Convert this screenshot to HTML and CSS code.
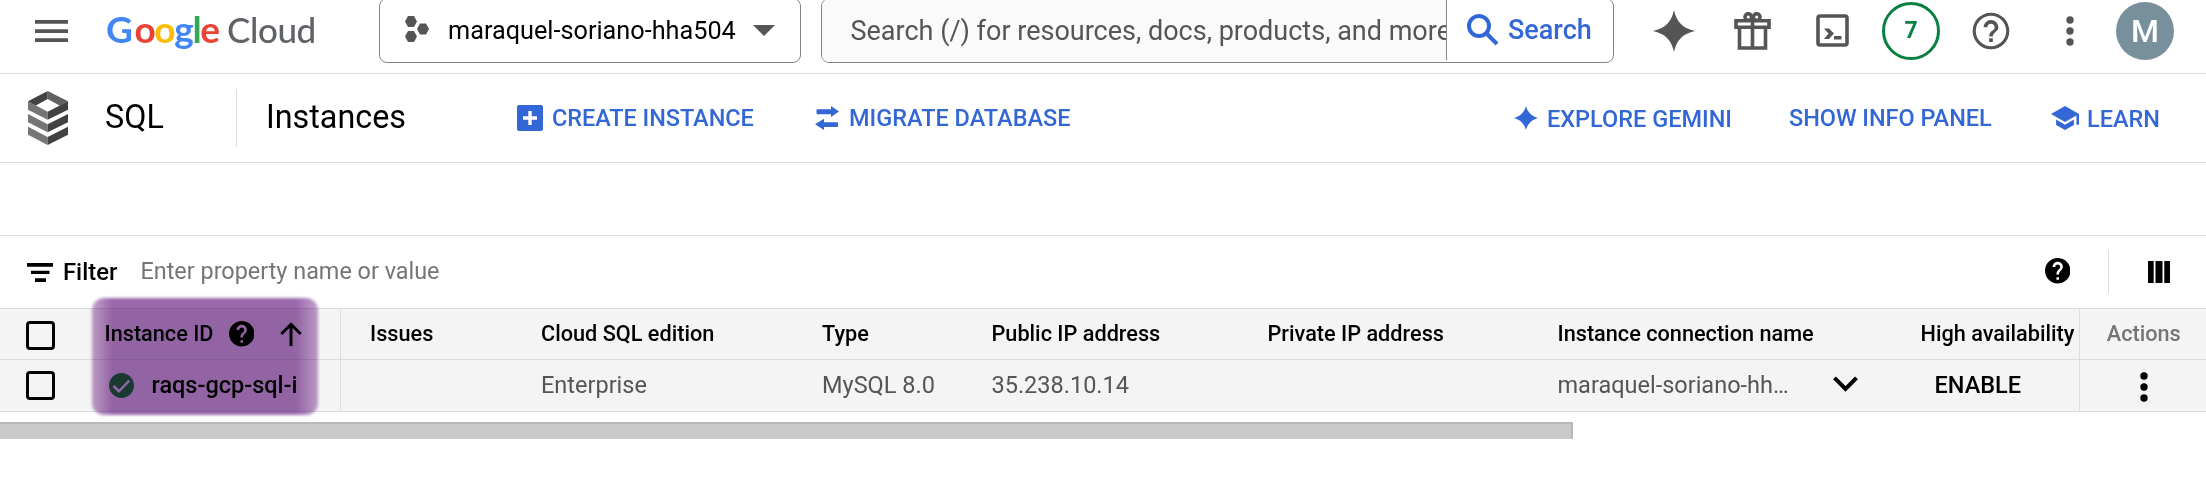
FILE: index.html
```html
<!DOCTYPE html>
<html lang="en">
<head>
<meta charset="utf-8">
<title>SQL – Instances – Google Cloud</title>
<link rel="stylesheet" href="styles.css">
</head>
<body>
<header class="topbar">
  <svg class="menu" viewBox="0 0 33 22"><path d="M0 0h33v3.7H0zM0 9.2h33v3.7H0zM0 18.3h33V22H0z"/></svg>
  <div class="brand"><span class="google"><span class="b cap">G</span><span class="r">o</span><span class="y">o</span><span class="b">g</span><span class="g">l</span><span class="r">e</span></span><span class="cloud">Cloud</span></div>
  <div class="project">
    <svg class="hexes" viewBox="0 0 24 26"><path d="M3 0h6l3 5.5L9 11H3L0 5.5zM15 7.5h6l3 5.5-3 5.5h-6L12 13zM3 15h6l3 5.5L9 26H3l-3-5.5z"/></svg>
    <span class="project-name">maraquel-soriano-hha504</span>
    <svg class="caret" viewBox="0 0 22 11"><path d="M0 0h22L11 11z"/></svg>
  </div>
  <div class="search">
    <div class="search-input">Search (/) for resources, docs, products, and more</div>
    <div class="search-button">
      <svg class="magnifier" viewBox="0 0 32 32"><circle cx="12" cy="12" r="10"/><path d="M19 19l11 11"/></svg>
      <span>Search</span>
    </div>
  </div>
  <svg class="spark" viewBox="0 0 42 42"><path d="M21 0C23.5 12 30 18.500 42 21C30 23.500 23.500 30 21 42C18.500 30 12 23.500 0 21C12 18.500 18.500 12 21 0z"/></svg>
  <svg class="gift" viewBox="0 0 37 38"><path d="M2 8.800h33v6.500H2zM5.500 15.300h26V36h-26zM18.500 8V36"/><circle cx="14.300" cy="5" r="3.300"/><circle cx="22.700" cy="5" r="3.300"/></svg>
  <svg class="shell" viewBox="0 0 33 33"><rect x="2" y="2" width="29" height="29" rx="2"/><path class="solid" d="M8 14.500h5l5 5-5 5.500H8l4.500-5.500zM18 22h7.500v3.500H18z"/></svg>
  <div class="count">7</div>
  <svg class="help-outline" viewBox="0 0 24 24"><path d="M11 18h2v-2h-2v2zm1-16C6.480 2 2 6.480 2 12s4.480 10 10 10 10-4.480 10-10S17.520 2 12 2zm0 18.300c-4.580 0-8.300-3.720-8.300-8.300S7.420 3.700 12 3.700s8.300 3.720 8.300 8.300-3.720 8.300-8.300 8.300zM12 6c-2.210 0-4 1.790-4 4h2c0-1.100.9-2 2-2s2 .9 2 2c0 2-3 1.750-3 5h2c0-2.250 3-2.500 3-5 0-2.210-1.790-4-4-4z"/></svg>
  <svg class="dots" viewBox="0 0 8 30"><circle cx="4" cy="4" r="3.700"/><circle cx="4" cy="15" r="3.700"/><circle cx="4" cy="26" r="3.700"/></svg>
  <div class="avatar">M</div>
</header>

<nav class="subbar">
  <svg class="sql-logo" viewBox="84 272 120 162">
    <path fill="#424242" d="M84 303l59-31v24l-37 20z"/><path fill="#616161" d="M143 272l61 31-24 13-37-20z"/>
    <path fill="#757575" d="M84 303l59 31v24l-59-30zM84 341l59 31v24l-59-30zM84 379l59 31v24l-59-31z"/>
    <path fill="#424242" d="M143 334l61-31v25l-61 30zM143 372l61-31v25l-61 30zM143 410l61-31v24l-61 31z"/>
  </svg>
  <h1 class="product">SQL</h1>
  <h2 class="page">Instances</h2>
  <div class="action create"><svg class="plus" viewBox="0 0 26 26"><path fill-rule="evenodd" d="M2 0h22a2 2 0 0 1 2 2v22a2 2 0 0 1-2 2H2a2 2 0 0 1-2-2V2a2 2 0 0 1 2-2zM11.300 6v5.300H6v3.400h5.300V20h3.400v-5.300H20v-3.400h-5.300V6z"/></svg><span>CREATE INSTANCE</span></div>
  <div class="action migrate"><svg class="swap" viewBox="0 0 24 24"><path d="M2.500 3.300H16V0l8 5.500-8 5.600V8.200H2.500a1 1 0 0 1-1-1V4.300a1 1 0 0 1 1-1zM22 16.200H9V12.800L0 18.300 9 24v-3h13a1 1 0 0 0 1-1v-2.800a1 1 0 0 0-1-1z"/></svg><span>MIGRATE DATABASE</span></div>
  <div class="action gemini"><svg class="mini-spark" viewBox="0 0 24 24"><path d="M12 0C13.500 6 18 10.500 24 12C18 13.500 13.500 18 12 24C10.500 18 6 13.500 0 12C6 10.500 10.500 6 12 0z"/></svg><span class="low">EXPLORE GEMINI</span></div>
  <div class="action info"><span>SHOW INFO PANEL</span></div>
  <div class="action learn"><svg class="school" viewBox="1 3 22 18" preserveAspectRatio="none"><path d="M5 13.180v4L12 21l7-3.820v-4L12 17l-7-3.820zM12 3L1 9l11 6 9-4.910V17h2V9L12 3z"/></svg><span class="low">LEARN</span></div>
</nav>

<main>
  <div class="filterbar">
    <svg class="filter-icon" viewBox="0 0 26 19"><path d="M0 0h26v3.700H0zM4 7.700h18.500v3.400H4zM8 15.200h11V19H8z"/></svg>
    <span class="filter-label">Filter</span>
    <span class="filter-hint">Enter property name or value</span>
    <svg class="help" viewBox="2 2 20 20"><path d="M12 2C6.480 2 2 6.480 2 12s4.480 10 10 10 10-4.480 10-10S17.520 2 12 2zm1 17h-2v-2h2v2zm2.070-7.750l-.9.920C13.450 12.900 13 13.500 13 15h-2v-.5c0-1.100.45-2.100 1.170-2.830l1.240-1.260c.37-.36.59-.86.59-1.410 0-1.100-.9-2-2-2s-2 .9-2 2H8c0-2.210 1.790-4 4-4s4 1.790 4 4c0 .88-.36 1.680-.93 2.250z"/></svg>
    <div class="columns"><svg viewBox="0 0 22 22"><path d="M0 0h5.700v22H0zM7.500 0h7v22h-7zM16.300 0H22v22h-5.700z"/></svg></div>
  </div>

  <div class="table">
    <div class="row head">
      <div class="pick"><span class="box"></span></div>
      <div class="id"><span class="id-title">Instance ID</span>
        <svg class="help" viewBox="2 2 20 20"><path d="M12 2C6.480 2 2 6.480 2 12s4.480 10 10 10 10-4.480 10-10S17.520 2 12 2zm1 17h-2v-2h2v2zm2.070-7.750l-.9.920C13.450 12.900 13 13.500 13 15h-2v-.5c0-1.100.45-2.100 1.170-2.830l1.240-1.260c.37-.36.59-.86.59-1.410 0-1.100-.9-2-2-2s-2 .9-2 2H8c0-2.210 1.790-4 4-4s4 1.790 4 4c0 .88-.36 1.680-.93 2.250z"/></svg>
        <svg class="arrow" viewBox="0 0 22 24"><path d="M11 24V2.500M1.300 12L11 2.300l9.700 9.700"/></svg>
      </div>
      <div class="issues">Issues</div>
      <div>Cloud SQL edition</div>
      <div>Type</div>
      <div>Public IP address</div>
      <div>Private IP address</div>
      <div>Instance connection name</div>
      <div>High availability</div>
      <div class="actions">Actions</div>
    </div>
    <div class="row">
      <div class="pick"><span class="box"></span></div>
      <div class="id"><svg class="ok" viewBox="2 2 20 20"><circle cx="12" cy="12" r="10"/><path d="M5.600 12.400l4.300 4.200 8.300-8.500"/></svg><span class="name">raqs-gcp-sql-i</span></div>
      <div class="issues"></div>
      <div>Enterprise</div>
      <div>MySQL 8.0</div>
      <div>35.238.10.14</div>
      <div></div>
      <div class="connection"><span>maraquel-soriano-hh…</span><svg class="chevron" viewBox="0 0 25 16"><path d="M1.500 1.800l11 11 11-11"/></svg></div>
      <div class="enable">ENABLE</div>
      <div class="actions"><svg class="dots" viewBox="0 0 8 30"><circle cx="4" cy="4" r="3.700"/><circle cx="4" cy="15" r="3.700"/><circle cx="4" cy="26" r="3.700"/></svg></div>
    </div>
    <div class="marker"></div>
  </div>
  <div class="scroll-thumb"></div>
</main>
</body>
</html>
```
FILE: styles.css
```css
* { box-sizing: border-box; }
body {
  margin: 0;
  height: 490px;
  overflow: hidden;
  background: #fff;
  color: #000;
  font-family: Roboto, sans-serif;
  font-size: 23.5px;
}
svg { display: block; flex: none; }

/* top bar */
.topbar {
  display: flex;
  align-items: center;
  height: 74px;
  padding: 0 32px 12px 35px;
  border-bottom: 1px solid #dadce0;
  fill: #555;
}
.topbar > * { flex: none; }
.menu { width: 33px; height: 22px; }
.brand {
  display: flex;
  align-items: baseline;
  width: 211px;
  margin: -3px 0 0 38px;
  font-family: Lato, sans-serif;
  line-height: 44px;
  white-space: nowrap;
}
.google { width: 121px; font-size: 37px; font-weight: 700; letter-spacing: -1.3px; }
.google .cap { letter-spacing: 1.5px; }
.cloud { font-size: 35px; font-weight: 500; color: #5f6368; letter-spacing: -0.4px; }
.b { color: #4285f4; }
.r { color: #ea4335; }
.y { color: #fbbc04; }
.g { color: #34a853; }

.project, .search {
  display: flex;
  align-items: center;
  height: 65px;
  border: 1px solid #80868b;
  border-radius: 8px;
}
.project { width: 422px; margin-left: 62px; padding-left: 25px; }
.hexes { width: 24px; height: 26px; margin-top: -3px; }
.project-name { flex: none; width: 322px; padding-left: 19px; font-size: 25.25px; white-space: nowrap; }
.caret { width: 22px; height: 11px; margin-left: 2px; }
.search { width: 793px; margin-left: 20px; overflow: hidden; font-size: 27px; }
.search-input {
  width: 624px;
  height: 63px;
  padding-left: 28.5px;
  overflow: hidden;
  background: #fafafa;
  color: #555;
  line-height: 64px;
  white-space: nowrap;
}
.search-button {
  display: flex;
  flex: 1;
  align-items: center;
  height: 61px;
  margin-bottom: 2px;
  padding-left: 20px;
  border-left: 1px solid #80868b;
  color: #3367d6;
  font-weight: 500;
}
.magnifier { width: 32px; height: 32px; margin-right: 9px; fill: none; stroke: #3367d6; stroke-width: 4; }
.spark { width: 42px; height: 42px; margin-left: 39px; }
.gift { width: 37px; height: 38px; margin-left: 39px; fill: none; stroke: #555; stroke-width: 3.6; }
.shell { width: 33px; height: 33px; margin-left: 45px; fill: none; stroke: #555; stroke-width: 3.6; }
.shell .solid { fill: #555; stroke: none; }
.count, .avatar {
  width: 58px;
  height: 58px;
  border-radius: 50%;
  text-align: center;
}
.count {
  margin-left: 33px;
  border: 3px solid #0b8043;
  color: #0b8043;
  font-weight: 700;
  font-size: 23px;
  line-height: 52px;
}
.help-outline { width: 44px; height: 44px; margin-left: 29px; }
.dots { width: 8px; height: 30px; }
.topbar .dots { margin-left: 53px; }
.avatar {
  margin-left: 42px;
  background: #78909c;
  color: #fff;
  font-size: 32px;
  font-weight: 500;
  line-height: 59px;
}

/* section bar */
.subbar {
  display: flex;
  align-items: center;
  height: 89px;
  padding-left: 28px;
  border-bottom: 1px solid #dadce0;
  white-space: nowrap;
}
.sql-logo { width: 40px; height: 54px; }
.product, .page {
  margin: 0;
  padding-bottom: 2px;
  font-size: 32.3px;
  font-weight: 400;
  line-height: 56px;
}
.product { width: 131px; margin-left: 37px; }
.page { width: 281px; padding-left: 29px; border-left: 1px solid #dadce0; }
.action { display: flex; align-items: center; color: #3367d6; fill: #3367d6; font-weight: 500; }
.low { position: relative; top: 1px; }
.plus { width: 26px; height: 26px; margin-right: 9px; }
.create { width: 298px; letter-spacing: -0.06px; }
.swap { width: 24px; height: 24px; margin-right: 10px; }
.migrate { width: 699px; }
.mini-spark { width: 24px; height: 24px; margin-right: 9px; }
.gemini { width: 275px; }
.info { width: 262px; letter-spacing: -0.05px; }
.school { width: 28px; height: 24px; margin-right: 8px; }

/* filter bar */
.filterbar {
  display: flex;
  align-items: center;
  height: 73px;
  margin-top: 72px;
  padding-left: 27px;
  border-top: 1px solid #dadce0;
}
.filter-icon { width: 26px; height: 19px; }
.filter-label { width: 78px; margin-left: 10px; font-weight: 500; font-size: 23.8px; }
.filter-hint { flex: none; width: 1904px; margin-top: -2px; margin-left: -0.5px; color: #757575; font-size: 23.4px; }
.help { width: 25.5px; height: 25.5px; }
.filterbar .help { margin: -2px 37.5px 0 0; }
.columns {
  display: flex;
  align-items: center;
  height: 43px;
  padding-left: 39px;
  margin-top: -1px;
  border-left: 1px solid #dadce0;
}
.columns svg { width: 22px; height: 22px; }

/* instance table */
.table { position: relative; border-top: 1px solid #dadce0; background: #f4f4f4; }
.row {
  display: grid;
  grid-template-columns: 104.5px 235.500px 201px 281px 169.500px 276px 290px 363px 158px 1fr;
  height: 52px;
  border-bottom: 1px solid #dadce0;
  color: #555;
  white-space: nowrap;
}
.row > div { display: flex; align-items: center; padding-bottom: 1px; }
.head { height: 51px; color: #000; font-size: 21.7px; font-weight: 500; }
.row > .pick { padding: 0 0 0 26px; }
.box { width: 29px; height: 29px; border: 3px solid #000; border-radius: 4px; }
.head .box { margin-top: 3px; }
.id { color: #000; font-weight: 500; }
.id-title { width: 124px; }
.id .help { margin-top: 1px; }
.arrow { width: 22px; height: 24px; margin: 1px 0 0 26px; fill: none; stroke: #000; stroke-width: 3; }
.ok { width: 25px; height: 25px; margin-left: 4px; fill: #2b8d48; }
.ok path { fill: none; stroke: #f4f4f4; stroke-width: 2; }
.name { margin-left: 18px; }
.row > .issues { padding-left: 29px; border-left: 1px solid #dadce0; }
.connection > span { width: 275px; }
.chevron { width: 25px; height: 16px; margin-top: -2px; fill: none; stroke: #000; stroke-width: 4; }
.row > .enable { padding-left: 14px; color: #000; font-weight: 500; }
.row > .actions { justify-content: center; padding-left: 2px; border-left: 1px solid #dadce0; color: #757575; }
.actions .dots { margin-top: 3px; fill: #000; }

/* highlighter stroke over the instance id column */
.marker {
  position: absolute;
  left: 92px;
  top: -11px;
  width: 226px;
  height: 117px;
  border-radius: 12px;
  background: linear-gradient(90deg, #c4a2cd 0, #9a68ac 20px, #9a68ac 204px, #c4a2cd 100%);
  mix-blend-mode: multiply;
  filter: blur(1.8px);
}

.scroll-thumb {
  width: 1573px;
  height: 17px;
  margin-top: 10px;
  border-top: 2px solid #b8b8b8;
  border-right: 2px solid #b8b8b8;
  background: #cacaca;
}
```
